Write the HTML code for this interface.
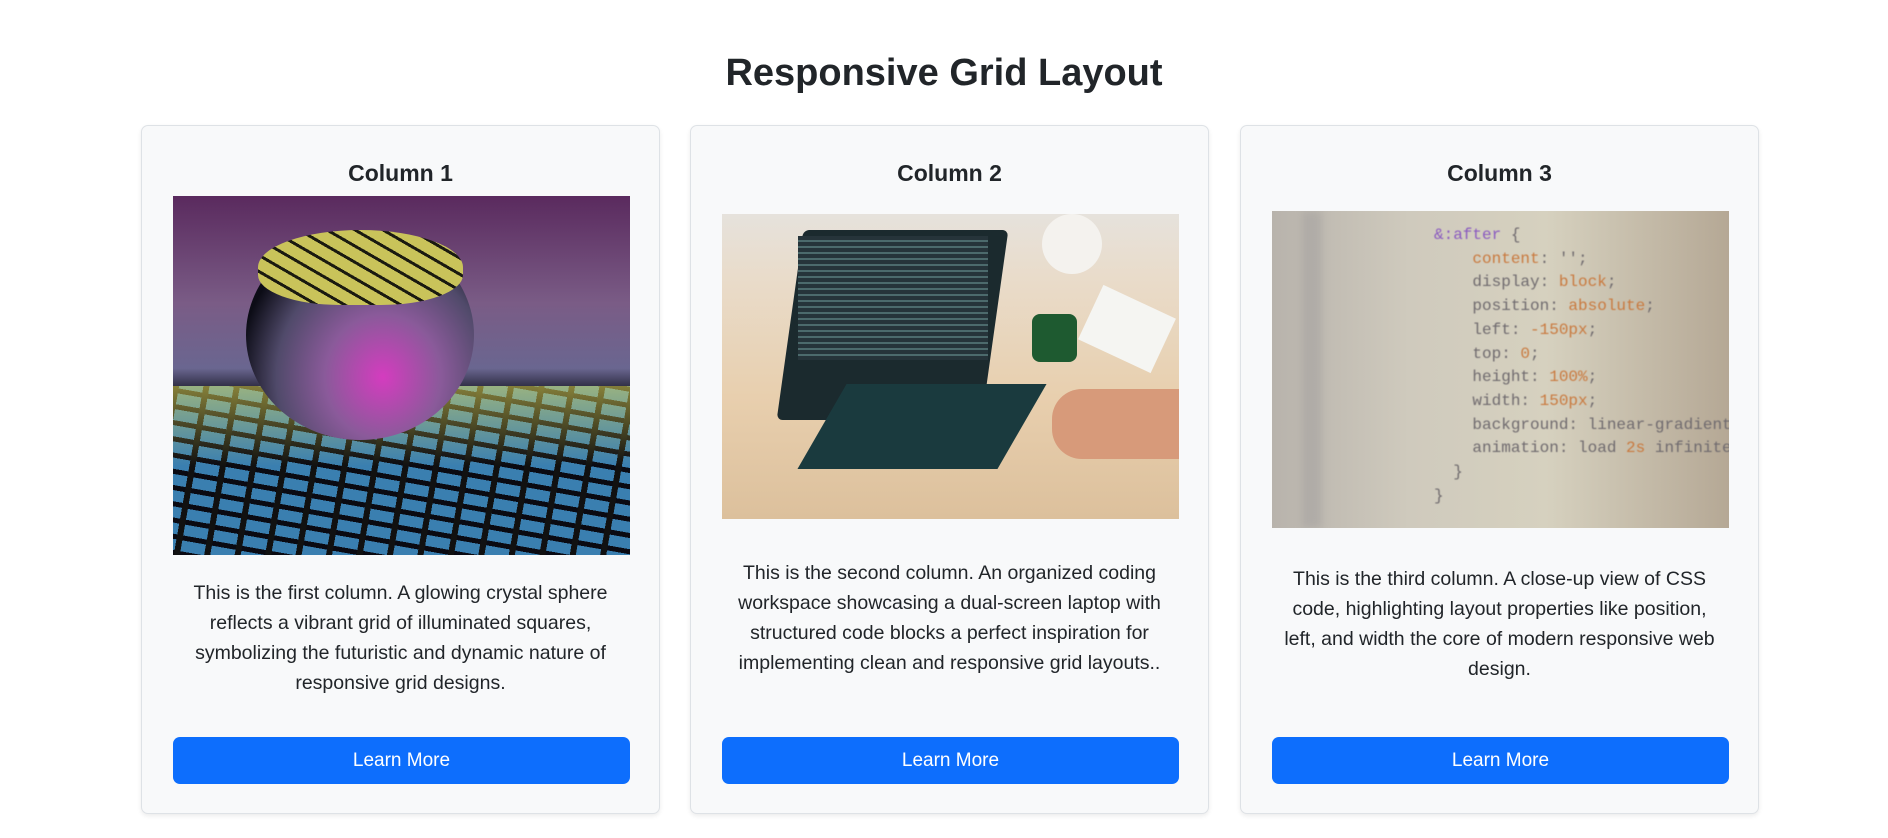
<!DOCTYPE html>
<html><head><meta charset="utf-8"><style>
*{box-sizing:border-box;margin:0;padding:0}
body{width:1888px;height:838px;background:#fff;font-family:"Liberation Sans",sans-serif;color:#212529;position:relative;overflow:hidden}
h1{position:absolute;top:48px;left:0;width:1888px;text-align:center;font-size:38px;font-weight:bold;line-height:50px}
.card{position:absolute;top:125px;width:519px;height:689px;background:#f8f9fa;border:1px solid #dee2e6;border-radius:7px;box-shadow:0 2px 5px rgba(0,0,0,.08)}
.card h3{position:absolute;top:157px;width:100%;text-align:center;font-size:23px;font-weight:bold;line-height:30px}
.img{position:absolute;left:31px;width:457px;overflow:hidden}
.txt{position:absolute;left:0;width:517px;text-align:center;font-size:19.5px;line-height:30px;white-space:nowrap}
.btn{position:absolute;left:31px;top:611px;width:457px;height:47px;background:#0d6efd;border-radius:7px;color:#fff;font-size:19px;line-height:47px;text-align:center}
.code{position:absolute;font-family:"Liberation Mono",monospace;font-size:16px;line-height:23.7px;white-space:pre;color:#6f6a6e;filter:blur(.4px)}
.o{color:#c9793e}
</style></head><body>
<h1>Responsive Grid Layout</h1>

<div class="card" style="left:141px">
<h3 style="top:32px">Column 1</h3>
<div class="img" style="top:70px;height:359px;background:linear-gradient(180deg,#5a2a5e 0%,#7a5c86 30%,#6a6690 48%,#1a1a2a 55%,#0c1224 100%)">
<div style="position:absolute;left:0;top:190px;width:457px;height:169px;background:repeating-linear-gradient(100deg,#111 0 6px,transparent 6px 30px),repeating-linear-gradient(10deg,#0a0a12 0 5px,#3a7fb0 5px 16px)"></div>
<div style="position:absolute;left:0;top:190px;width:457px;height:80px;background:linear-gradient(180deg,rgba(230,220,90,.55),rgba(0,0,0,0))"></div>
<div style="position:absolute;left:73px;top:34px;width:228px;height:210px;border-radius:50%;background:radial-gradient(ellipse at 60% 70%,#d43cbf 0%,#8a5a9a 30%,#504a6a 55%,#0c0c16 75%)"></div>
<div style="position:absolute;left:85px;top:34px;width:205px;height:75px;border-radius:50% 50% 40% 40%;background:repeating-linear-gradient(30deg,#1a1a10 0 3px,#c9c35a 3px 14px)"></div>
</div>
<div class="txt" style="top:452px">This is the first column. A glowing crystal sphere<br>reflects a vibrant grid of illuminated squares,<br>symbolizing the futuristic and dynamic nature of<br>responsive grid designs.</div>
<div class="btn">Learn More</div>
</div>

<div class="card" style="left:690px">
<h3 style="top:32px">Column 2</h3>
<div class="img" style="top:88px;height:305px;background:linear-gradient(180deg,#e6e2dc 0%,#e9dccb 20%,#e8cfae 60%,#dcc09c 100%)">
<div style="position:absolute;left:68px;top:16px;width:205px;height:190px;background:#1b2a2e;transform:skewX(-8deg);border-radius:6px"></div>
<div style="position:absolute;left:76px;top:22px;width:190px;height:124px;background:repeating-linear-gradient(180deg,#26343a 0 4px,#4c6a6c 4px 6px)"></div>
<div style="position:absolute;left:100px;top:170px;width:200px;height:85px;background:#1a3a3e;transform:skewX(-30deg)"></div>
<div style="position:absolute;left:310px;top:100px;width:45px;height:48px;border-radius:8px;background:#1e5a30"></div>
<div style="position:absolute;left:365px;top:85px;width:80px;height:60px;background:#f5f5f2;transform:rotate(25deg)"></div>
<div style="position:absolute;left:330px;top:175px;width:127px;height:70px;background:#d79a7a;border-radius:30px 0 0 30px"></div>
<div style="position:absolute;left:320px;top:0;width:60px;height:60px;border-radius:50%;background:#f4f2ee"></div>
</div>
<div class="txt" style="top:432px">This is the second column. An organized coding<br>workspace showcasing a dual-screen laptop with<br>structured code blocks a perfect inspiration for<br>implementing clean and responsive grid layouts..</div>
<div class="btn">Learn More</div>
</div>

<div class="card" style="left:1240px">
<h3 style="top:32px">Column 3</h3>
<div class="img" style="top:85px;height:317px;background:linear-gradient(90deg,#b8b3ac 0%,#cfcabd 30%,#d6d1bf 60%,#b5a895 100%)">
<div class="code" style="left:162px;top:13px"><span style="color:#8a5ac0">&amp;:after</span> {
    <span class="o">content</span>: '';
    display: <span class="o">block</span>;
    position: <span class="o">absolute</span>;
    left: <span class="o">-150px</span>;
    top: <span class="o">0</span>;
    height: <span class="o">100%</span>;
    width: <span class="o">150px</span>;
    background: linear-gradient(
    animation: load <span class="o">2s</span> infinite
  }
}</div>
<div style="position:absolute;left:30px;top:0;width:20px;height:317px;background:rgba(120,120,130,.2);filter:blur(4px)"></div>
</div>
<div class="txt" style="top:438px">This is the third column. A close-up view of CSS<br>code, highlighting layout properties like position,<br>left, and width the core of modern responsive web<br>design.</div>
<div class="btn">Learn More</div>
</div>
</body></html>
